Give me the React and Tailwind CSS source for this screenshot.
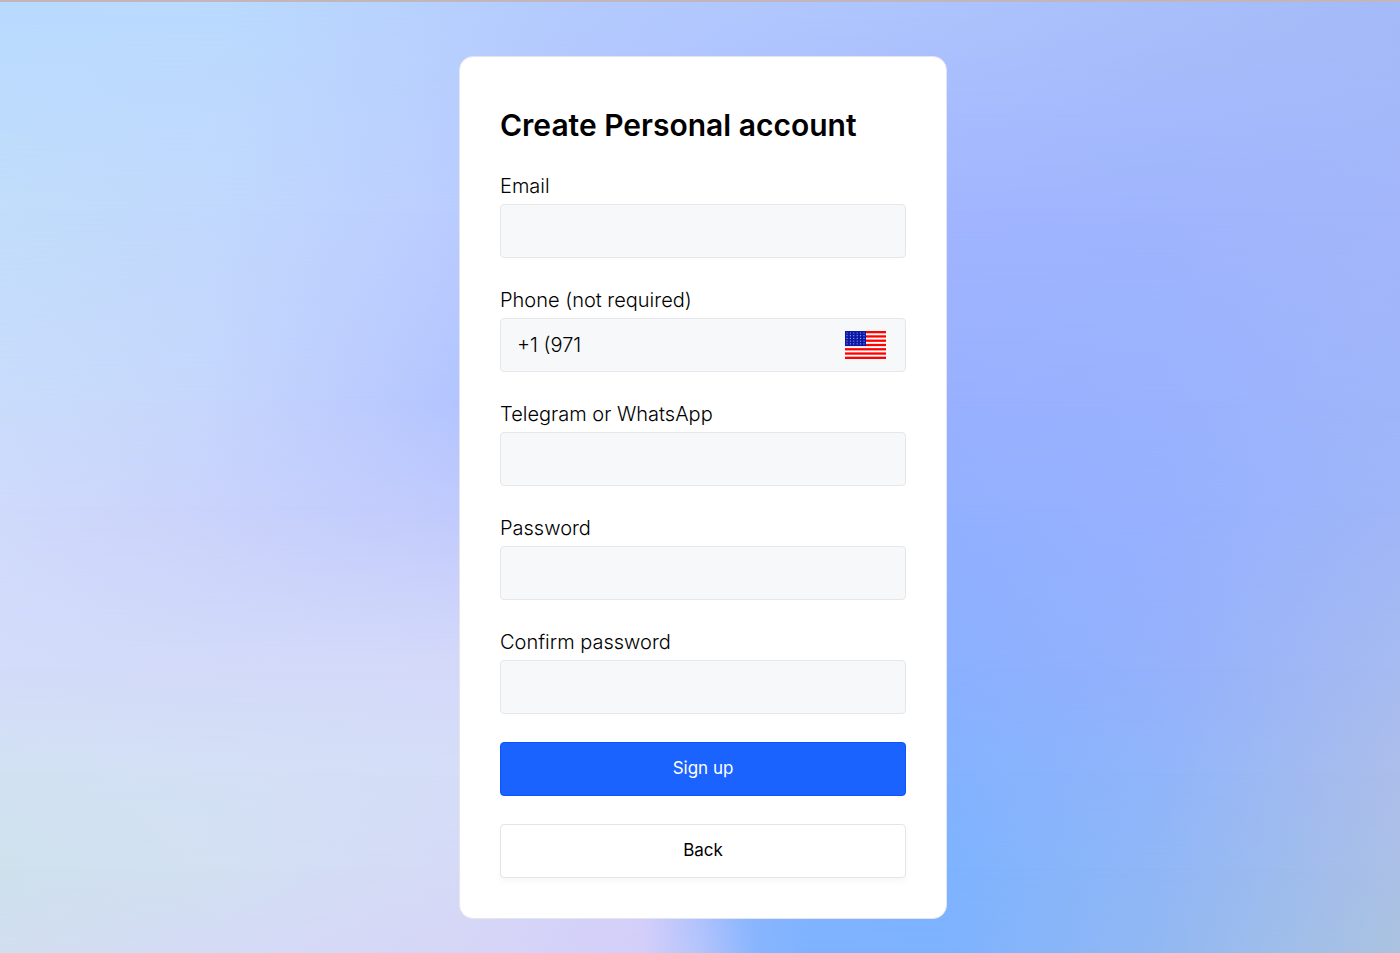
import { useState } from 'react'

// Backdrop mesh: every row is a horizontal gradient, faded in from the row above it
const MESH = [
  { y: 0,   stops: '#b9daff 0%, #badafe 16%, #b8d3fe 28%, #b4cbfe 40%, #aec4fd 67%, #a8bffa 83%, #a4bbf8 100%' },
  { y: 22,  stops: '#c1ddfb 0%, #c1d8fd 16%, #bccfff 30%, #b3c4ff 40%, #a1b5ff 67%, #9fb5fd 83%, #a3b6fa 100%' },
  { y: 42,  stops: '#c9dcfb 0%, #c6d7fc 14%, #bccbfe 26%, #b2c4ff 33%, #98b0ff 67%, #9ab2fe 83%, #9fb6fa 100%' },
  { y: 53,  stops: '#cfdafb 0%, #cbd4fb 12%, #c5cffc 22%, #c0cafd 33%, #92b0ff 67%, #97b1ff 83%, #9fb6f8 100%' },
  { y: 70,  stops: '#d3dcfa 0%, #d3daf9 16%, #d4d9f9 33%, #8ab0ff 67%, #95b1fc 83%, #a6bbf0 100%' },
  { y: 81,  stops: '#d2e1f2 0%, #d3e0f5 16%, #d5ddf8 33%, #83b2ff 67%, #91b5fa 83%, #acbeea 100%' },
  { y: 91,  stops: '#cfe1ed 0%, #d2e0f2 16%, #d5daf7 33%, #d3cffa 46%, #8ab5fe 53%, #7db3ff 67%, #91b7f6 83%, #abc0e6 100%' },
  { y: 100, stops: '#d1deef 0%, #d4daf5 16%, #d6d5f6 33%, #d3cef9 46%, #b4c4fc 50%, #88b5fe 54%, #7db2ff 58%, #7db2ff 67%, #92b8f2 83%, #abc3e0 100%' },
]

const FIELDS = [
  { id: 'email',    label: 'Email',                type: 'email' },
  { id: 'phone',    label: 'Phone (not required)', type: 'tel' },
  { id: 'contact',  label: 'Telegram or WhatsApp', type: 'text' },
  { id: 'password', label: 'Password',             type: 'password' },
  { id: 'confirm',  label: 'Confirm password',     type: 'password' },
]

function Backdrop() {
  return (
    <div className="absolute inset-0 -z-10" aria-hidden="true">
      {MESH.map(({ y, stops }, i) => (
        <div
          key={y}
          className="absolute inset-0"
          style={{
            backgroundImage: `linear-gradient(to right, ${stops})`,
            maskImage: i === 0 ? 'none' : `linear-gradient(to bottom, transparent ${MESH[i - 1].y}%, black ${y}%)`,
          }}
        />
      ))}
    </div>
  )
}

function UsFlag() {
  const stars = []
  for (let row = 0; row < 5; row++) {
    for (let col = 0; col < 6; col++) {
      stars.push(<circle key={`${row}-${col}`} cx={2 + col * 3.4} cy={2 + row * 2.7} r="0.6" />)
    }
  }
  return (
    <svg viewBox="0 0 41 28" className="w-[41px] h-7 shrink-0" role="img" aria-label="United States">
      <rect width="41" height="28" fill="#fff" />
      {[0, 1, 2, 3, 4, 5, 6].map((n) => (
        <rect key={n} y={n * 4.28} width="41" height="2.3" fill="#f00" />
      ))}
      <rect width="21" height="15" fill="#0a17a7" />
      <g fill="#a9b2e8">{stars}</g>
    </svg>
  )
}

export default function App() {
  const [values, setValues] = useState({ email: '', phone: '+1 (971', contact: '', password: '', confirm: '' })

  const update = (e) => setValues({ ...values, [e.target.id]: e.target.value })

  return (
    <main className="relative isolate min-h-screen flex justify-center items-start pt-[54px] pb-8 pl-1.5 border-t-2 border-[#c2b5bc] font-[Inter,sans-serif] text-black">
      <Backdrop />
      <form
        className="w-full max-w-[488px] rounded-[14px] border border-[#e4e6ee] bg-white px-10 pt-12 pb-10"
        onSubmit={(e) => e.preventDefault()}
      >
        <h1 className="text-[30px] leading-10 font-semibold">Create Personal account</h1>

        {/* Fields */}
        <div className="mt-[27px] flex flex-col gap-7">
          {FIELDS.map(({ id, label, type }) => (
            <div key={id}>
              <label htmlFor={id} className="block pb-1 text-xl leading-7 font-light">{label}</label>
              <div className="flex items-center h-[54px] rounded border border-[#e5e7eb] bg-[#f7f8fa] pl-4 pr-[19px]">
                <input
                  id={id}
                  type={type}
                  value={values[id]}
                  onChange={update}
                  className="flex-1 min-w-0 h-full bg-transparent text-xl font-light outline-none"
                />
                {id === 'phone' && <UsFlag />}
              </div>
            </div>
          ))}
        </div>

        {/* Actions */}
        <div className="mt-7 flex flex-col gap-7">
          <button type="submit" className="h-[54px] rounded border border-[#0a55ff] bg-[#1a63ff] text-[17px] text-white">
            Sign up
          </button>
          <button type="button" className="h-[54px] rounded border border-[#e5e5e8] bg-white text-[17px] shadow-[0_4px_6px_rgba(0,0,0,0.03)]">
            Back
          </button>
        </div>
      </form>
    </main>
  )
}
